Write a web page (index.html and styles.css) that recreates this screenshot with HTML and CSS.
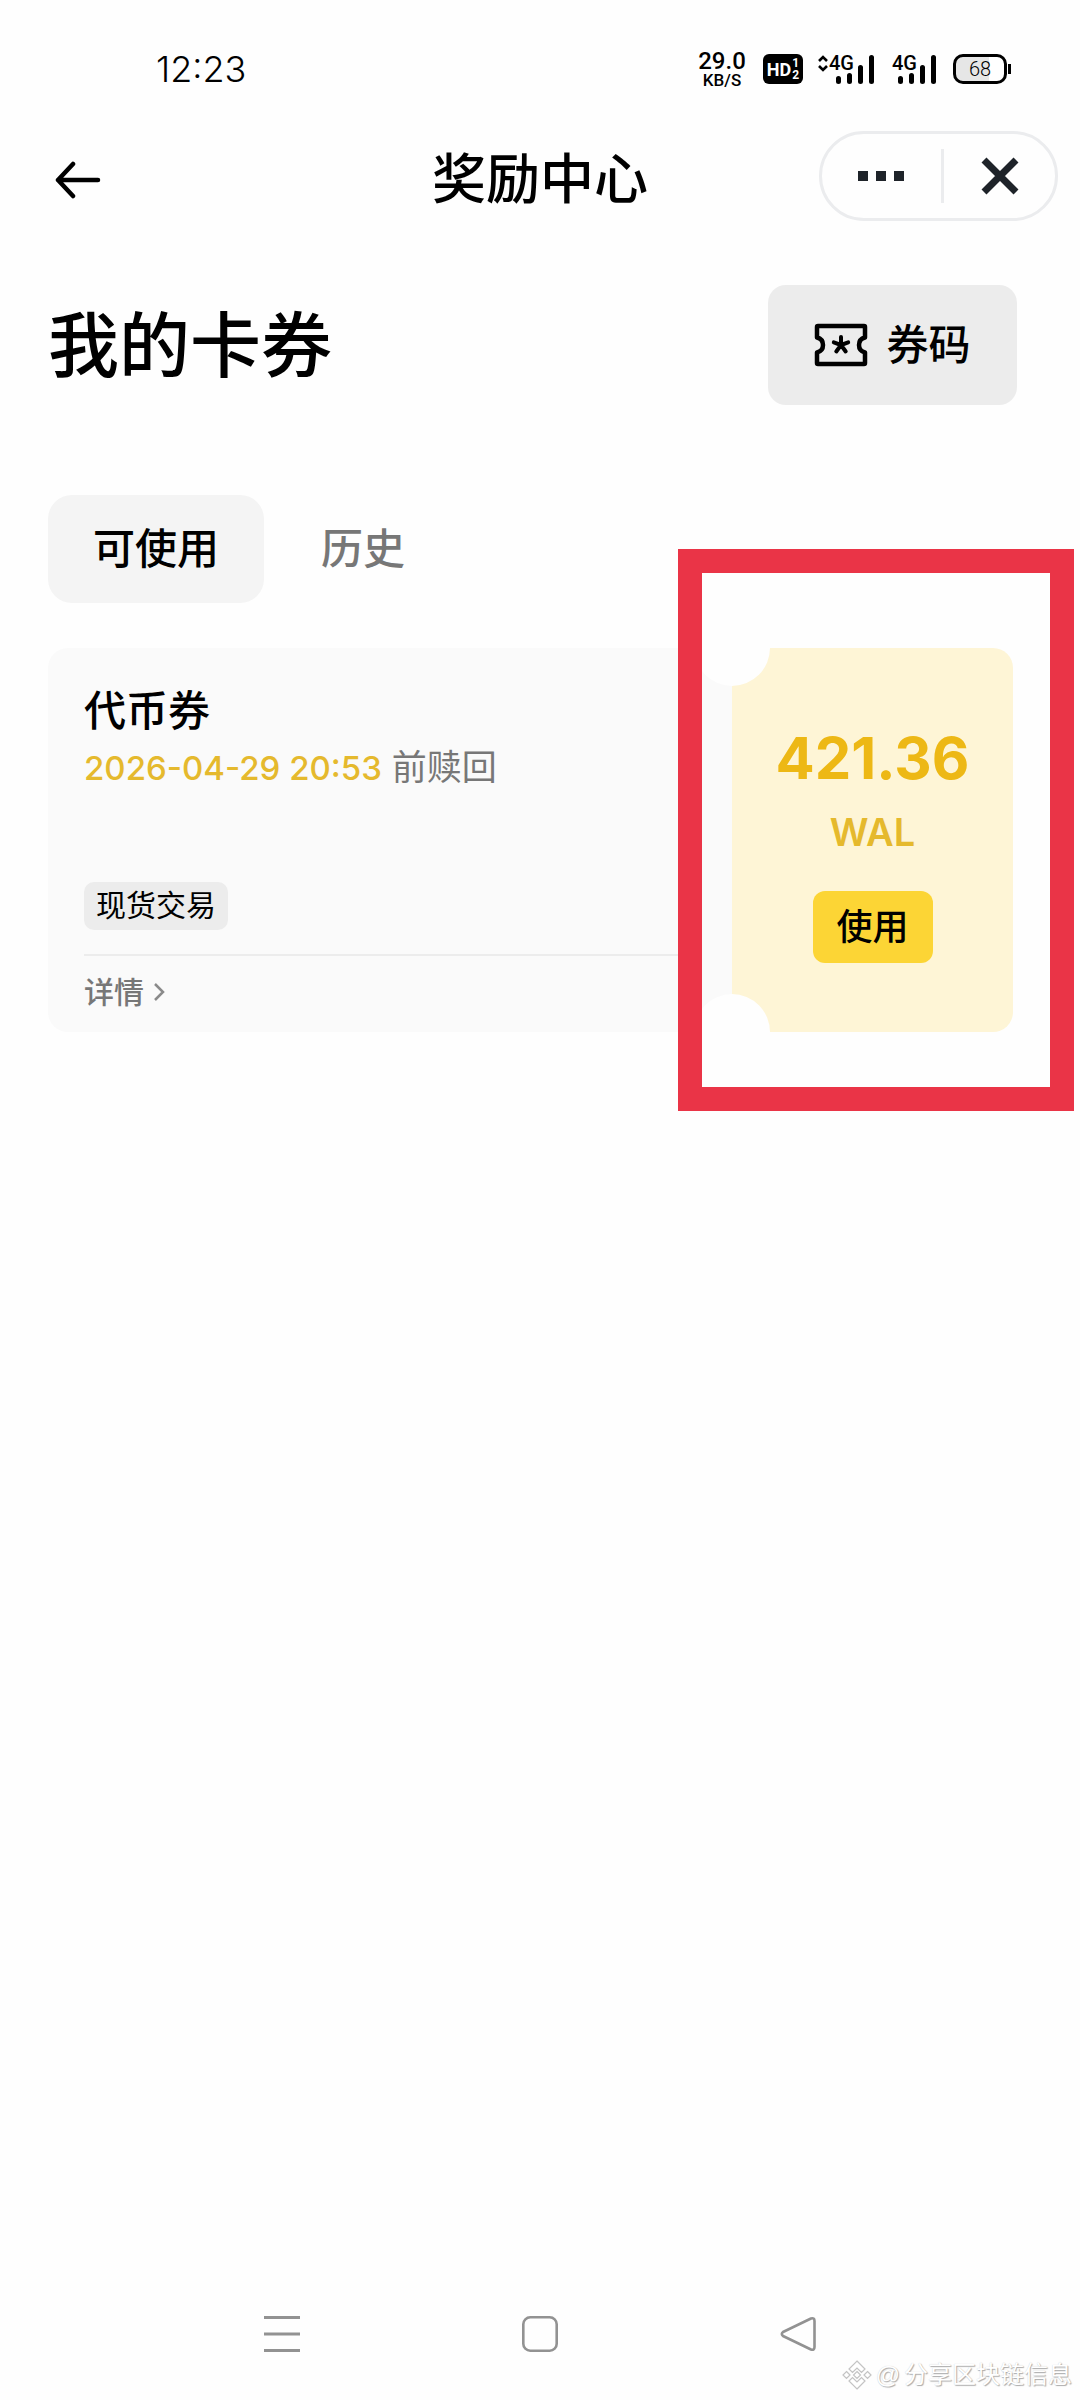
FILE: index.html
```html
<!DOCTYPE html>
<html lang="zh-CN">
<head>
<meta charset="utf-8">
<meta name="viewport" content="width=device-width, initial-scale=1">
<title>奖励中心</title>
<link rel="stylesheet" href="styles.css">
</head>
<body>
<div class="status">
  <span class="clock">12:23</span>
  <div class="indicators">
    <div class="speed"><span class="speed-value">29.0</span><span class="speed-unit">KB/S</span></div>
    <div class="hd"><span class="hd-label">HD</span><span class="hd-sims"><span>1</span><span>2</span></span></div>
    <svg class="signal" width="58" height="36" viewBox="0 -3 58 36" aria-hidden="true">
      <path d="M2 7l4-4 4 4M2 12l4 4 4-4" fill="none" stroke="#000" stroke-width="2.6"/>
      <text class="net" x="12" y="16">4G</text>
      <path d="M21.500 24.500v3M32.500 21.500v6M43.500 13.500v14M54.500 3.500v24" fill="none" stroke="#000" stroke-width="5" stroke-linecap="round"/>
    </svg>
    <svg class="signal" width="46" height="36" viewBox="0 -3 46 36" aria-hidden="true">
      <text class="net" x="1" y="16">4G</text>
      <path d="M9.500 24.500v3M20.500 21.500v6M31.500 13.500v14M42.500 3.500v24" fill="none" stroke="#000" stroke-width="5" stroke-linecap="round"/>
    </svg>
    <div class="battery"><span class="battery-level">68</span></div>
  </div>
</div>

<header class="topbar">
  <button class="back" aria-label="返回">
    <svg width="46" height="38" viewBox="0 0 46 38" fill="none" stroke="#000" stroke-width="4.500" stroke-linecap="round" stroke-linejoin="round"><path d="M43 19H3M18 3L3 19l15 16"/></svg>
  </button>
  <h1 class="page-name">奖励中心</h1>
  <div class="capsule">
    <button class="capsule-btn" aria-label="更多">
      <svg width="46" height="10" viewBox="0 0 46 10" fill="#1e2329"><path d="M0 0h10v10H0zM18 0h10v10H18zM36 0h10v10H36z"/></svg>
    </button>
    <span class="capsule-line"></span>
    <button class="capsule-btn" aria-label="关闭">
      <svg width="38" height="38" viewBox="0 0 38 38" stroke="#1e2329" stroke-width="7"><path d="M3 3l32 32M35 3L3 35"/></svg>
    </button>
  </div>
</header>

<main class="content">
  <div class="heading">
    <h2 class="heading-text">我的卡券</h2>
    <button class="code-btn">
      <svg width="54" height="44" viewBox="0 0 54 44" fill="none" stroke="#000" stroke-width="4.500" stroke-linejoin="round" stroke-linecap="round"><path d="M4 3H50a1 1 0 0 1 1 1V14.500c-4 1-6 4-6 7.500s2 6.500 6 7.500V40a1 1 0 0 1-1 1H4a1 1 0 0 1-1-1V29.500c4-1 6-4 6-7.500s-2-6.500-6-7.500V4a1 1 0 0 1 1-1z"/><path d="M27 22V14M27 22l7.200-2.600M27 22l4.700 6.500M27 22l-4.700 6.500M27 22l-7.200-2.600" stroke-width="4"/></svg>
      <span>券码</span>
    </button>
  </div>

  <nav class="tabs">
    <button class="tab tab-active">可使用</button>
    <button class="tab">历史</button>
  </nav>

  <article class="coupon">
    <div class="coupon-main">
      <h3 class="coupon-name">代币券</h3>
      <p class="coupon-expiry"><time class="coupon-date">2026-04-29 20:53</time> 前赎回</p>
      <span class="coupon-tag">现货交易</span>
      <a class="coupon-details" href="#">详情
        <svg width="12" height="20" viewBox="0 0 12 20" fill="none" stroke="#8a8a8a" stroke-width="2.500"><path d="M2 2l8 8-8 8"/></svg>
      </a>
    </div>
    <div class="coupon-side">
      <span class="notch notch-top"></span>
      <span class="notch notch-bottom"></span>
      <strong class="amount">421.36</strong>
      <span class="token">WAL</span>
      <button class="use-btn">使用</button>
      <span class="highlight"></span>
    </div>
  </article>
</main>

<footer class="sysnav">
  <button class="sysnav-btn" aria-label="最近任务"><svg width="36" height="36" viewBox="0 0 36 36" stroke="#929292" stroke-width="3"><path d="M0 1.500h36M0 18h36M0 34.500h36"/></svg></button>
  <button class="sysnav-btn" aria-label="主页"><svg width="36" height="36" viewBox="0 0 36 36" fill="none" stroke="#929292" stroke-width="2.600"><rect x="1.300" y="1.300" width="33.400" height="33.400" rx="7"/></svg></button>
  <button class="sysnav-btn" aria-label="返回"><svg width="36" height="36" viewBox="0 0 36 36" fill="none" stroke="#929292" stroke-width="2.600" stroke-linejoin="round"><path d="M31 2.500L3 16q-2.400 2 0 4L31 33.500q3.500 1 3.500-2.500V5q0-3.500-3.500-2.500z"/></svg></button>
</footer>

<div class="watermark">
  <svg width="30" height="32" viewBox="0 0 30 32" fill="#fff" stroke="#c4c4c4" stroke-width="1.200"><path d="M15 2l8 8-3.500 3.500L15 9l-4.500 4.500L7 10zM15 30l8-8-3.500-3.500L15 23l-4.500-4.500L7 22zM4.500 12.500L8 16l-3.500 3.500L1 16zM25.500 12.500L29 16l-3.500 3.500L22 16zM15 12.500l3.500 3.500-3.500 3.500-3.500-3.500z"/></svg>
  <span class="watermark-at">@</span>
  <span>分享区块链信息</span>
</div>
</body>
</html>
```
FILE: styles.css
```css
* { box-sizing: border-box; }

body {
  margin: 0;
  min-height: 100vh;
  position: relative;
  display: flex;
  flex-direction: column;
  background: #fefefe;
  color: #000;
  font-family: Inter, "Noto Sans CJK SC", sans-serif;
}

h1, h2, h3, p { margin: 0; }

button {
  padding: 0;
  border: 0;
  background: none;
  color: inherit;
  font-family: inherit;
}

svg { display: block; flex: none; }

/* status bar */
.status {
  display: flex;
  justify-content: space-between;
  align-items: center;
  height: 131px;
  padding: 7px 68px 0 156px;
}
.clock { font-size: 36px; line-height: 42px; font-weight: 300; }
.indicators { display: flex; align-items: center; }
.speed {
  display: flex;
  flex-direction: column;
  align-items: center;
  width: 48px;
  margin-right: 17px;
  font-family: Roboto, sans-serif;
  font-weight: 500;
}
.speed-value { font-size: 24px; line-height: 22px; }
.speed-unit { font-size: 17px; line-height: 17px; }
.hd {
  display: flex;
  align-items: center;
  justify-content: center;
  gap: 1px;
  width: 40px;
  height: 30px;
  margin-right: 14px;
  border-radius: 6px;
  background: #000;
  color: #fff;
  font-family: Roboto, sans-serif;
  font-weight: 700;
}
.hd-label { font-size: 18px; }
.hd-sims { display: flex; flex-direction: column; font-size: 12px; line-height: 12px; }
.signal { margin-right: 16px; }
.net { font: 500 20px Roboto, sans-serif; }
.battery {
  position: relative;
  width: 54px;
  height: 30px;
  margin-right: 5px;
  border: 3px solid #000;
  border-radius: 10px;
  background: linear-gradient(90deg, #e6e6e6 68%, #fff 68%);
  text-align: center;
}
.battery::after {
  content: "";
  position: absolute;
  top: 7px;
  right: -7px;
  width: 3px;
  height: 10px;
  background: #000;
}
.battery-level { display: block; font: 300 20px/24px Roboto, sans-serif; }

/* page bar */
.topbar {
  display: grid;
  grid-template-columns: 1fr auto 1fr;
  align-items: center;
  padding: 0 22px;
}
.back { justify-self: start; padding: 8px 0 0 33px; }
.page-name { padding-top: 8px; font-size: 54px; line-height: 80px; font-weight: 500; }
.capsule {
  justify-self: end;
  display: flex;
  align-items: center;
  justify-content: space-between;
  width: 239px;
  height: 90px;
  padding: 0 36px;
  border: 3px solid #ebecee;
  border-radius: 45px;
}
.capsule-btn { display: flex; }
.capsule-line { width: 3px; height: 54px; background: #ebecee; }

/* content */
.content { padding: 64px 63px 0 48px; }
.heading { display: flex; justify-content: space-between; align-items: center; }
.heading-text { font-size: 71px; line-height: 104px; font-weight: 500; }
.code-btn {
  display: flex;
  align-items: center;
  justify-content: center;
  gap: 18px;
  width: 249px;
  height: 120px;
  border-radius: 18px;
  background: #ececec;
  font-size: 42px;
  line-height: 60px;
  font-weight: 500;
}
.tabs { display: flex; gap: 12px; margin-top: 90px; }
.tab {
  height: 108px;
  padding: 0 45px 8px;
  border-radius: 24px;
  color: #777;
  font-size: 42px;
  font-weight: 500;
}
.tab-active { background: #f4f4f4; color: #000; }

/* coupon card */
.coupon {
  display: grid;
  grid-template-columns: 1fr 281px;
  height: 384px;
  margin: 45px 4px 0 0;
}
.coupon-main {
  display: flex;
  flex-direction: column;
  align-items: flex-start;
  padding: 33px 36px 0;
  border-radius: 20px 0 0 20px;
  background: #fafafa;
}
.coupon-name { font-size: 42px; line-height: 60px; font-weight: 500; }
.coupon-expiry { color: #777; font-size: 35px; line-height: 52px; white-space: nowrap; }
.coupon-date { color: #e5b92d; font-size: 33px; font-weight: 500; }
.coupon-tag {
  margin-top: 88px;
  padding: 0 12px 2px;
  border-radius: 10px;
  background: #ececec;
  font-size: 30px;
  line-height: 46px;
}
.coupon-details {
  display: flex;
  align-items: center;
  align-self: stretch;
  gap: 9px;
  margin-top: 24px;
  padding-top: 14px;
  border-top: 2px solid #ececec;
  color: #777;
  font-size: 30px;
  line-height: 44px;
  font-weight: 500;
  text-decoration: none;
}
.coupon-side {
  position: relative;
  display: flex;
  flex-direction: column;
  align-items: center;
  padding-top: 76px;
  border-radius: 0 20px 20px 0;
  background: #fef5d6;
}
.amount { color: #edb815; font-size: 58px; line-height: 68px; font-weight: 700; }
.token { margin-top: 16px; color: #e5b92d; font-size: 38px; line-height: 48px; font-weight: 600; }
.use-btn {
  width: 120px;
  height: 72px;
  margin-top: 35px;
  padding-bottom: 6px;
  border-radius: 12px;
  background: #fcd535;
  font-size: 36px;
  font-weight: 500;
}
.notch {
  position: absolute;
  left: -38px;
  width: 76px;
  height: 38px;
  background: #fefefe;
}
.notch-top { top: 0; border-radius: 0 0 38px 38px; }
.notch-bottom { bottom: 0; border-radius: 38px 38px 0 0; }
.highlight {
  position: absolute;
  top: -99px;
  right: -61px;
  bottom: -79px;
  left: -54px;
  border: 24px solid #ea3447;
  pointer-events: none;
}

/* system navigation */
.sysnav {
  display: grid;
  grid-template-columns: repeat(3, 1fr);
  margin-top: auto;
  padding: 0 153px 48px;
}
.sysnav-btn { display: flex; justify-content: center; }

.watermark {
  position: absolute;
  right: 8px;
  bottom: 7px;
  display: flex;
  align-items: center;
  gap: 4px;
  color: #fff;
  font-size: 24px;
  line-height: 36px;
  text-shadow: 1px 1px 1px #aaa, 0 0 1px #ccc;
}
.watermark-at { font-family: "Liberation Sans", sans-serif; }
```
